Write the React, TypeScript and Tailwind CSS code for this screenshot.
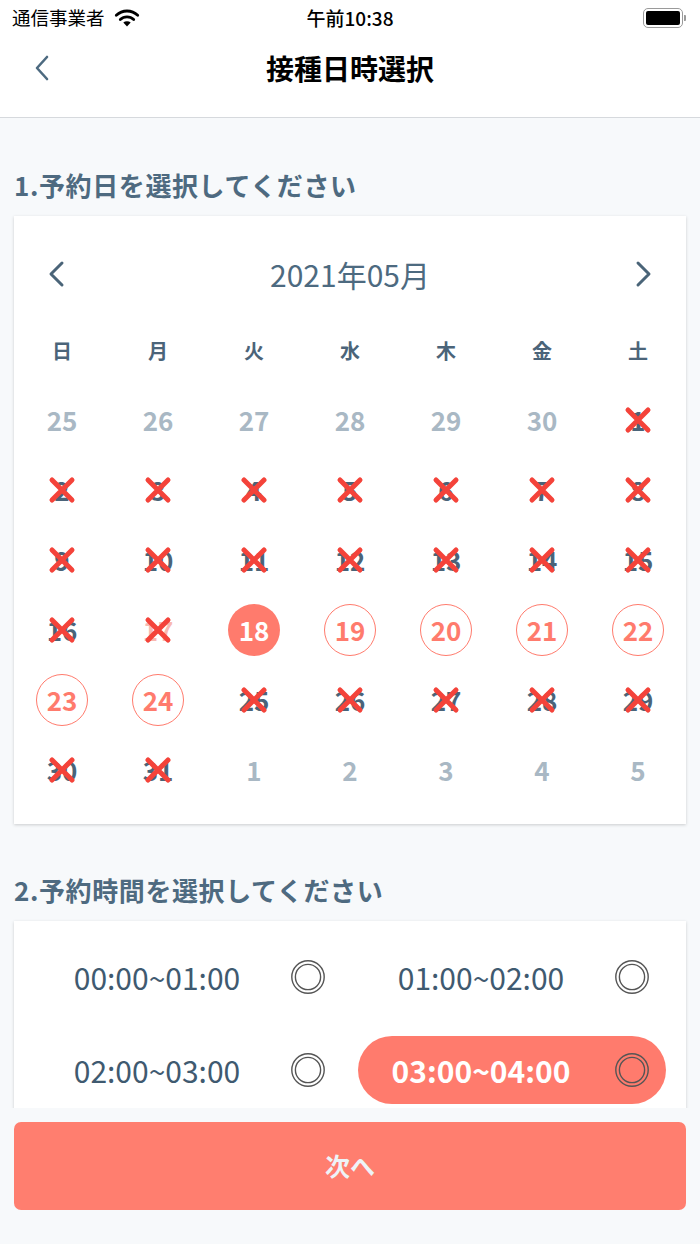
import React from "react";

const jp = "font-['Noto_Sans_CJK_JP',sans-serif]";

type Day = {
  n: number;
  kind: "out" | "closed" | "open" | "selected";
  faded?: boolean;
};

const weekdays = ["日", "月", "火", "水", "木", "金", "土"];

function buildDays(): Day[] {
  const days: Day[] = [];
  for (let n = 25; n <= 30; n++) days.push({ n, kind: "out" });
  for (let n = 1; n <= 31; n++) {
    if (n === 18) days.push({ n, kind: "selected" });
    else if (n >= 19 && n <= 24) days.push({ n, kind: "open" });
    else days.push({ n, kind: "closed", faded: n === 17 });
  }
  for (let n = 1; n <= 5; n++) days.push({ n, kind: "out" });
  return days;
}

const slots = [
  { label: "00:00~01:00", selected: false },
  { label: "01:00~02:00", selected: false },
  { label: "02:00~03:00", selected: false },
  { label: "03:00~04:00", selected: true },
];

function Cross() {
  return (
    <svg
      width="27"
      height="27"
      viewBox="0 0 27 27"
      className="absolute left-1/2 top-1/2 -translate-x-1/2 -translate-y-1/2"
    >
      <path
        d="M3.5 3.5 L23.5 23.5 M23.5 3.5 L3.5 23.5"
        stroke="#f4433a"
        strokeWidth="5"
        strokeLinecap="round"
      />
    </svg>
  );
}

function Radio() {
  return (
    <svg width="36" height="36" viewBox="0 0 36 36">
      <circle cx="18" cy="18" r="16.2" fill="none" stroke="#555" strokeWidth="1.4" />
      <circle cx="18" cy="18" r="12.6" fill="none" stroke="#555" strokeWidth="1.4" />
    </svg>
  );
}

function DayCell({ day }: { day: Day }) {
  if (day.kind === "out") {
    return <span className="text-[26px] font-bold text-[#a9b8c4]">{day.n}</span>;
  }
  if (day.kind === "closed") {
    return (
      <span
        className={`relative text-[26px] font-bold ${day.faded ? "text-[#f8b9b1]" : "text-[#4a6479]"}`}
      >
        {day.n}
        <Cross />
      </span>
    );
  }
  if (day.kind === "selected") {
    return (
      <span className="flex h-[52px] w-[52px] items-center justify-center rounded-full bg-[#ff7b6d] text-[26px] font-bold text-white">
        {day.n}
      </span>
    );
  }
  return (
    <span className="flex h-[52px] w-[52px] items-center justify-center rounded-full border-[1.5px] border-[#ff7b6d] text-[26px] font-bold text-[#ff7b6d]">
      {day.n}
    </span>
  );
}

export default function App() {
  const days = buildDays();

  return (
    <div className={`${jp} flex h-[1244px] w-[700px] flex-col overflow-hidden bg-[#f7f9fb]`}>
      {/* status bar + nav */}
      <header className="bg-white border-b border-[#d6d9dd]">
        <div className="flex h-[36px] items-center justify-between px-[12px] text-black">
          <div className="flex w-[200px] items-center gap-[9px] text-[18.5px]">
            <span>通信事業者</span>
            <svg width="26" height="20" viewBox="0 0 26 20">
              <path d="M13 18.5 L9.3 14.6 A5.4 5.4 0 0 1 16.7 14.6 Z" fill="#000" />
              <path
                d="M6.3 11.5 A9.6 9.6 0 0 1 19.7 11.5"
                fill="none"
                stroke="#000"
                strokeWidth="2.8"
                strokeLinecap="round"
              />
              <path
                d="M2.3 7.3 A15.4 15.4 0 0 1 23.7 7.3"
                fill="none"
                stroke="#000"
                strokeWidth="2.8"
                strokeLinecap="round"
              />
            </svg>
          </div>
          <span className="text-[19px] font-medium">午前10:38</span>
          <div className="flex w-[200px] items-center justify-end pr-[2px]">
            <div className="flex h-[20px] w-[40px] items-center rounded-[5px] border-[1.5px] border-[#9a9a9a] p-[2px]">
              <div className="h-full w-full rounded-[2px] bg-black" />
            </div>
            <div className="ml-[1px] h-[6px] w-[2px] rounded-r-[1px] bg-[#9a9a9a]" />
          </div>
        </div>
        <div className="relative flex h-[64px] items-center justify-center">
          <svg
            width="16"
            height="26"
            viewBox="0 0 16 26"
            className="absolute left-[34px] top-1/2 -translate-y-1/2"
          >
            <path
              d="M13 2 L3 13 L13 24"
              fill="none"
              stroke="#4d6a80"
              strokeWidth="2.6"
              strokeLinecap="round"
              strokeLinejoin="round"
            />
          </svg>
          <h1 className="text-[28px] font-bold text-black">接種日時選択</h1>
        </div>
        <div className="h-[17px]" />
      </header>

      {/* scroll content */}
      <main className="flex-1 overflow-hidden px-[14px] pt-[51px]">
        <h2 className="h-[32px] text-[26px] font-bold leading-[32px] tracking-[0.6px] text-[#4e6a80]">
          1.予約日を選択してください
        </h2>

        <section className="mt-[15px] bg-white pb-[18px] pt-[30px] shadow-[0_1px_3px_rgba(0,0,0,0.18)]">
          <div className="mb-[14px] flex h-[56px] items-center justify-between px-[32px]">
            <svg width="20" height="28" viewBox="0 0 20 28">
              <path
                d="M16 3 L5 14 L16 25"
                fill="none"
                stroke="#4a6478"
                strokeWidth="3"
                strokeLinecap="round"
                strokeLinejoin="round"
              />
            </svg>
            <span className="text-[30px] font-normal text-[#4d6a80]">2021年05月</span>
            <svg width="20" height="28" viewBox="0 0 20 28">
              <path
                d="M4 3 L15 14 L4 25"
                fill="none"
                stroke="#4a6478"
                strokeWidth="3"
                strokeLinecap="round"
                strokeLinejoin="round"
              />
            </svg>
          </div>

          <div className="grid grid-cols-7">
            {weekdays.map((w) => (
              <div
                key={w}
                className="flex h-[70px] items-center justify-center text-[20px] font-bold text-[#4b6479]"
              >
                {w}
              </div>
            ))}
            {days.map((d, i) => (
              <div key={i} className="flex h-[70px] items-center justify-center pb-[3px]">
                <DayCell day={d} />
              </div>
            ))}
          </div>
        </section>

        <h2 className="mt-[50px] h-[32px] text-[26px] font-bold leading-[32px] tracking-[0.6px] text-[#4e6a80]">
          2.予約時間を選択してください
        </h2>

        <section className="mt-[15px] grid grid-cols-2 gap-x-[16px] gap-y-[25px] bg-white px-[20px] pb-[20px] pt-[22px] shadow-[0_1px_3px_rgba(0,0,0,0.18)]">
          {slots.map((s) => (
            <div
              key={s.label}
              className={`flex h-[68px] items-center rounded-full pl-[23px] pr-[16px] ${s.selected ? "bg-[#ff7b6d]" : ""}`}
            >
              <span
                className={`w-[200px] text-center text-[30px] ${s.selected ? "font-bold text-white" : "font-normal text-[#3f5a70]"}`}
              >
                {s.label}
              </span>
              <div className="ml-auto">
                <Radio />
              </div>
            </div>
          ))}
        </section>
      </main>

      {/* fixed footer */}
      <footer className="bg-[#f7f9fb] px-[14px] pb-[34px] pt-[14px]">
        <button className="flex h-[88px] w-full items-center justify-center rounded-[7px] bg-[#ff7e6f] text-[25px] font-bold text-[#eef3f7]">
          次へ
        </button>
      </footer>
    </div>
  );
}
